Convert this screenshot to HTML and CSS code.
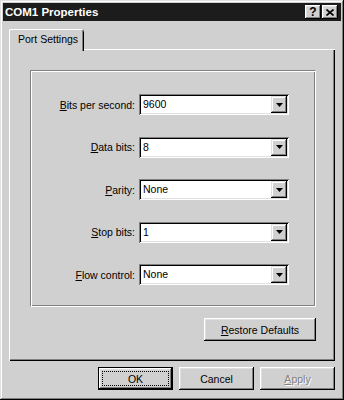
FILE: index.html
```html
<!DOCTYPE html>
<html lang="en">
<head>
    <meta charset="UTF-8">
    <title>COM1 Properties</title>
    <link rel="stylesheet" href="styles.css">
</head>
<body>
    <div class="window">
        <div class="titlebar">
            <span class="title">COM1 Properties</span>
            <div class="title-buttons">
                <button class="tb-btn help">?</button>
                <button class="tb-btn close">
                    <svg width="8" height="7" viewBox="0 0 8 7"><path d="M0.5 0.5 L7.5 6.5 M7.5 0.5 L0.5 6.5" stroke="#000" stroke-width="1.6" fill="none"/></svg>
                </button>
            </div>
        </div>
        <div class="content">
            <div class="tabs">
                <div class="tab active">Port Settings</div>
            </div>
            <div class="panel">
                <div class="group">
                    <label class="label"><u>B</u>its per second:</label>
                    <div class="combo"><span class="combo-value">9600</span><span class="combo-arrow"><svg width="7" height="4" viewBox="0 0 7 4"><path d="M0 0 H7 L3.5 4 Z" fill="#000"/></svg></span></div>

                    <label class="label"><u>D</u>ata bits:</label>
                    <div class="combo"><span class="combo-value">8</span><span class="combo-arrow"><svg width="7" height="4" viewBox="0 0 7 4"><path d="M0 0 H7 L3.5 4 Z" fill="#000"/></svg></span></div>

                    <label class="label"><u>P</u>arity:</label>
                    <div class="combo"><span class="combo-value">None</span><span class="combo-arrow"><svg width="7" height="4" viewBox="0 0 7 4"><path d="M0 0 H7 L3.5 4 Z" fill="#000"/></svg></span></div>

                    <label class="label"><u>S</u>top bits:</label>
                    <div class="combo"><span class="combo-value">1</span><span class="combo-arrow"><svg width="7" height="4" viewBox="0 0 7 4"><path d="M0 0 H7 L3.5 4 Z" fill="#000"/></svg></span></div>

                    <label class="label"><u>F</u>low control:</label>
                    <div class="combo"><span class="combo-value">None</span><span class="combo-arrow"><svg width="7" height="4" viewBox="0 0 7 4"><path d="M0 0 H7 L3.5 4 Z" fill="#000"/></svg></span></div>
                </div>
                <div class="panel-actions">
                    <button class="btn restore"><span><u>R</u>estore Defaults</span></button>
                </div>
            </div>
            <div class="dialog-buttons">
                <button class="btn default"><span class="focus">OK</span></button>
                <button class="btn"><span>Cancel</span></button>
                <button class="btn disabled"><span><u>A</u>pply</span></button>
            </div>
        </div>
    </div>
</body>
</html>
```

FILE: styles.css
```css
body{
    margin: 0;
    background: #d0d0d0;
    font-family: "Liberation Sans", Arial, sans-serif;
    font-size: 10.5px;
    color: #000;
}
.window{
    width: 344px;
    height: 400px;
    box-sizing: border-box;
    padding: 3px;
    background: #d0d0d0;
    box-shadow: inset -1px -1px #000, inset 1px 1px #e0e0e0, inset -2px -2px #808080, inset 2px 2px #fff;
}
.titlebar{
    height: 18px;
    background: #1c1c1c;
    display: flex;
    align-items: center;
    justify-content: space-between;
    padding: 0 3px 0 2px;
}
.title{
    color: #fff;
    font-weight: bold;
    font-size: 11.5px;
}
.title-buttons{
    display: flex;
    gap: 1px;
}
.tb-btn{
    width: 16px;
    height: 14px;
    border: 0;
    padding: 0;
    background: #d0d0d0;
    font-family: "Liberation Sans", Arial, sans-serif;
    font-weight: bold;
    font-size: 12px;
    line-height: 14px;
    display: flex;
    align-items: center;
    justify-content: center;
    box-shadow: inset -1px -1px #000, inset 1px 1px #fff, inset -2px -2px #808080, inset 2px 2px #e0e0e0;
}
.content{
    padding: 8px 6px 0 6px;
}
.tabs{
    display: flex;
    height: 20px;
}
.tab{
    width: 75px;
    height: 22px;
    margin-bottom: -2px;
    box-sizing: border-box;
    padding: 3px 0 0 9px;
    background: #d0d0d0;
    position: relative;
    z-index: 1;
    line-height: 14px;
    border-radius: 2px 2px 0 0;
    box-shadow: inset 1px 0 #fff, inset 0 1px #fff, inset -1px 0 #000, inset -2px 0 #808080;
}
.panel{
    height: 312px;
    box-sizing: border-box;
    padding: 21px 0 0 21px;
    box-shadow: inset 1px 1px #fff, inset -1px -1px #000, inset -2px -2px #808080;
}
.group{
    width: 286px;
    height: 237px;
    box-sizing: border-box;
    padding-top: 23px;
    display: grid;
    grid-template-columns: 104px 150px;
    grid-auto-rows: 21px;
    column-gap: 4px;
    row-gap: 21.5px;
    align-items: center;
    border-top: 1px solid #808080;
    border-left: 1px solid #808080;
    border-right: 1px solid #fff;
    border-bottom: 1px solid #fff;
    box-shadow: inset 1px 1px #fff, inset -1px -1px #808080;
}
.label{
    text-align: right;
}
.combo{
    height: 21px;
    box-sizing: border-box;
    padding: 2px;
    display: flex;
    background: #fff;
    box-shadow: inset 1px 1px #808080, inset -1px -1px #fff, inset 2px 2px #000, inset -2px -2px #e0e0e0;
}
.combo-value{
    flex: 1;
    padding-left: 2px;
    line-height: 17px;
}
.combo-arrow{
    width: 16px;
    height: 17px;
    background: #d0d0d0;
    display: flex;
    align-items: center;
    justify-content: center;
    box-shadow: inset -1px -1px #000, inset 1px 1px #e0e0e0, inset -2px -2px #808080, inset 2px 2px #fff;
}
.panel-actions{
    width: 286px;
    margin-top: 11px;
    display: flex;
    justify-content: flex-end;
}
.btn{
    width: 75px;
    height: 23px;
    border: 0;
    padding: 0;
    background: #d0d0d0;
    font-family: "Liberation Sans", Arial, sans-serif;
    font-size: 10.5px;
    color: #000;
    display: flex;
    align-items: center;
    justify-content: center;
    box-shadow: inset -1px -1px #000, inset 1px 1px #fff, inset -2px -2px #808080, inset 2px 2px #e0e0e0;
}
.btn.restore{
    width: 112px;
}
.dialog-buttons{
    margin-top: 6px;
    display: flex;
    justify-content: flex-end;
    gap: 6px;
}
.btn.default{
    align-items: stretch;
    padding: 4px;
    box-sizing: border-box;
    box-shadow: inset 0 0 0 1px #000, inset -2px -2px #000, inset 2px 2px #fff, inset -3px -3px #808080, inset 3px 3px #e0e0e0;
}
.focus{
    flex: 1;
    border: 1px dotted #000;
    display: flex;
    align-items: center;
    justify-content: center;
}
.btn.disabled{
    color: #808080;
    text-shadow: 1px 1px 0 #fff;
}
```
